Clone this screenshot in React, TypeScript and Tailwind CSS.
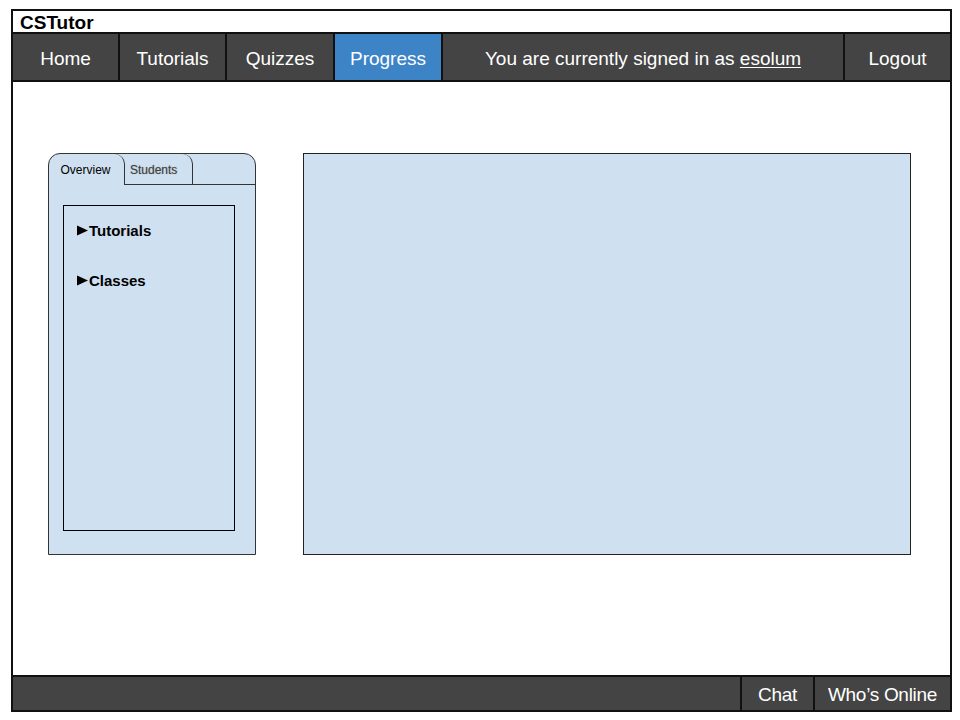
import React from 'react';

const navItems = [
  { label: 'Home', w: 'w-[107px]' },
  { label: 'Tutorials', w: 'w-[107px]' },
  { label: 'Quizzes', w: 'w-[108px]' },
];

function Arrow() {
  return (
    <svg width="11" height="11" viewBox="0 0 11 11" className="mr-[1px] shrink-0">
      <path d="M0 0.5 L11 5.5 L0 10.5 Z" fill="#000" />
    </svg>
  );
}

export default function App() {
  return (
    <div className="w-[960px] h-[720px] bg-white pt-[9px] pl-[11px] font-['Liberation_Sans',Arial,sans-serif]">
      <div className="w-[941px] h-[703px] border-2 border-[#111] flex flex-col">
        <div className="h-[21px] flex items-center pl-[7px] pt-[2px] text-[19px] font-bold text-black leading-none">
          CSTutor
        </div>

        <div className="h-[50px] flex border-y-2 border-[#111] bg-[#444] text-white text-[19px] leading-none">
          {navItems.map((n) => (
            <div key={n.label} className={`${n.w} flex items-center justify-center pt-[2px] border-r-2 border-[#111]`}>
              {n.label}
            </div>
          ))}
          <div className="w-[108px] flex items-center justify-center pt-[2px] border-r-2 border-[#111] bg-[#3d84c7]">
            Progress
          </div>
          <div className="flex-1 flex items-center justify-center pt-[2px]">
            <span>
              You are currently signed in as <span className="underline underline-offset-2">esolum</span>
            </span>
          </div>
          <div className="w-[107px] flex items-center justify-center pt-[2px] border-l-2 border-[#111]">
            Logout
          </div>
        </div>

        <div className="flex-1 flex items-start pl-[35px] pt-[71px]">
          <div className="w-[208px] h-[402px] border border-[#333] rounded-t-[12px] bg-[#cfe0f1] flex flex-col">
            <div className="h-[31px] flex text-[12px] text-black">
              <div className="w-[76px] flex items-center justify-center pt-[1px] pr-[2px] rounded-tr-[10px] border-r border-[#333]">
                Overview
              </div>
              <div className="w-[68px] flex items-center pl-[5px] pt-[1px] text-[#444] [text-shadow:0_0_1px_#888] rounded-tr-[10px] border-r border-b border-[#333]">
                Students
              </div>
              <div className="flex-1 border-b border-[#333]" />
            </div>
            <div className="ml-[14px] mt-[20px] w-[172px] h-[326px] border border-black pl-[13px] pt-[16px] text-[15px] leading-[17px] font-bold text-black flex flex-col gap-[33px]">
              <div className="flex items-center">
                <Arrow />
                Tutorials
              </div>
              <div className="flex items-center">
                <Arrow />
                Classes
              </div>
            </div>
          </div>

          <div className="ml-[47px] w-[608px] h-[402px] border border-[#222] bg-[#cfe0f1]" />
        </div>

        <div className="h-[35px] flex border-t-2 border-[#111] bg-[#444] text-white text-[19px] leading-none">
          <div className="flex-1" />
          <div className="w-[73px] flex items-center justify-center pt-[2px] border-l-2 border-[#111] tracking-[-0.3px]">
            Chat
          </div>
          <div className="w-[137px] flex items-center justify-center pt-[2px] border-l-2 border-[#111] tracking-[-0.3px]">
            Who’s Online
          </div>
        </div>
      </div>
    </div>
  );
}
